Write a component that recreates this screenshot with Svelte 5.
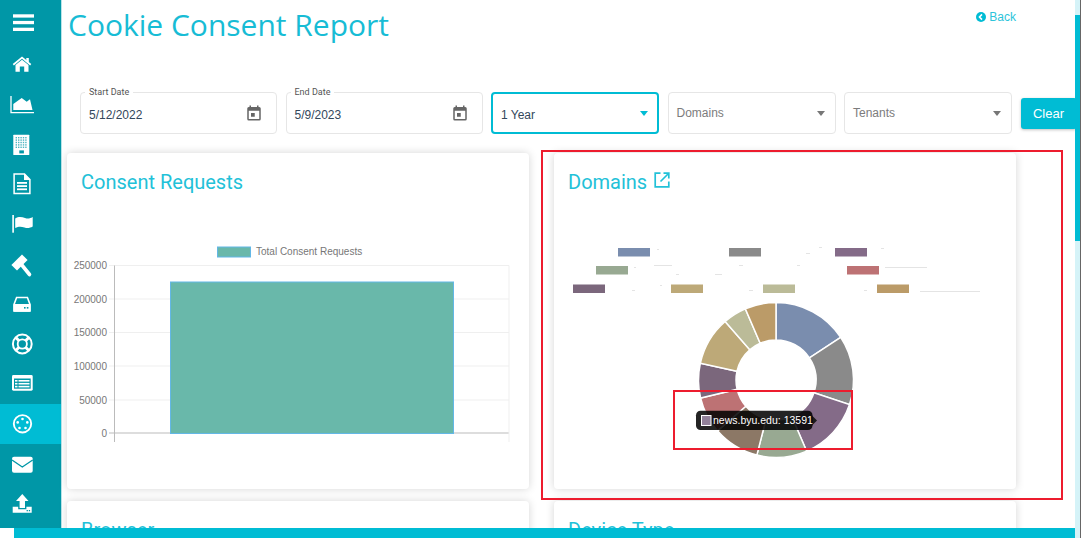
<script>
  const slices = [
    [0, 56.6, '#7a8dae'],
    [56.6, 108.5, '#8a8a8a'],
    [108.5, 156.7, '#846b88'],
    [156.7, 194.3, '#98a992'],
    [194.3, 229, '#8c7866'],
    [229, 256.5, '#bd7274'],
    [256.5, 282.5, '#7b677c'],
    [282.5, 319, '#bda978'],
    [319, 336.7, '#bbbb98'],
    [336.7, 360, '#bb9b68']
  ];
  const cx = 776, cy = 380, R = 77.5, r = 40;
  const pt = (rad, a) => {
    const t = (a * Math.PI) / 180;
    return (cx + rad * Math.sin(t)).toFixed(2) + ' ' + (cy - rad * Math.cos(t)).toFixed(2);
  };
  const arc = (a, b) => {
    const large = b - a > 180 ? 1 : 0;
    return `M${pt(R, a)}A${R} ${R} 0 ${large} 1 ${pt(R, b)}L${pt(r, b)}A${r} ${r} 0 ${large} 0 ${pt(r, a)}Z`;
  };
  const legend = [
    [618, 248, '#7a8dae'], [729, 248, '#8a8a8a'], [835, 248, '#846b88'],
    [596, 266, '#98a992'], [847, 266, '#bd7274'],
    [573, 284.5, '#7b677c'], [671, 284.5, '#bda978'], [763, 284.5, '#bbbb98'], [877, 284.5, '#bb9b68']
  ];
  const specks = [
    [657, 249, 2], [819, 247, 3], [806, 253, 4], [881, 248, 3], [634, 267, 2], [654, 265, 18],
    [676, 274, 3], [715, 274, 7], [739, 265, 4], [797, 265, 3], [885, 267, 42], [632, 290, 3],
    [660, 285, 2], [749, 290, 4], [864, 290, 3], [920, 291, 60]
  ];
  const ticks = [[250000, 265.5], [200000, 299], [150000, 332.5], [100000, 366], [50000, 400], [0, 433]];
  const windows = [];
  for (let row = 0; row < 5; row++) for (let col = 0; col < 5; col++) windows.push([15.6 + col * 2.4, 13 + row * 2.4]);
</script>

<div class="page">
  <nav class="side">
    <div class="item"><svg viewBox="0 0 44 40"><rect x="13" y="10.3" width="21" height="3.3"/><rect x="13" y="16.9" width="21" height="3.3"/><rect x="13" y="23.7" width="21" height="3.3"/></svg></div>
    <div class="item"><svg viewBox="0 0 44 40"><path d="M15.5 21 22 15.7 28.5 21V27.7H24.2V22.5H19.8V27.7H15.5Z"/><path class="line" stroke-width="1.8" d="M13.3 20.7 22 13.6 30.7 20.7"/><rect x="26.3" y="14" width="2.5" height="4"/></svg></div>
    <div class="item"><svg viewBox="0 0 44 40"><path class="line" stroke-width="1.3" d="M11 12V28.7H34"/><path d="M13.3 26V20L21.7 14 26.7 17.7 30 15.3 32.5 26Z"/></svg></div>
    <div class="item"><svg viewBox="0 0 44 40"><rect x="13.3" y="10.7" width="16" height="20.3" rx=".6"/>{#each windows as w}<rect class="cut-soft" x={w[0]} y={w[1]} width="1.4" height="1.4"/>{/each}<rect class="cut" x="19.3" y="26.4" width="4.6" height="3"/></svg></div>
    <div class="item"><svg viewBox="0 0 44 40"><path class="line" stroke-width="1.5" d="M14.1 10.1H24.5L29.9 15.5V29.5H14.1Z"/><path d="M24 9.5 30.5 16H24Z"/><rect x="17" y="18" width="10" height="1.8"/><rect x="17" y="21.2" width="10" height="1.8"/><rect x="17" y="24.4" width="10" height="1.8"/></svg></div>
    <div class="item"><svg viewBox="0 0 44 40"><rect x="12.3" y="11" width="1.6" height="17.7"/><path d="M15.2 14.5C19 12 22 13 25 14 28 15 30 14.5 32.7 13V22.5C30 24 27.5 24.5 24.5 23.5 21 22.3 18.5 22.3 15.2 24Z"/></svg></div>
    <div class="item"><svg viewBox="0 0 44 40"><path d="M27.6 16 22 10.4 11.4 21 17 26.6Z"/><path class="line" stroke-width="3.6" stroke-linecap="round" d="M21 20 29.5 30.5"/></svg></div>
    <div class="item"><svg viewBox="0 0 44 40"><path class="line" stroke-width="1.6" d="M16.6 13.5H27.4L30 20.5V27H14V20.5Z"/><rect x="13.5" y="20" width="17" height="7.7" rx="1"/><rect class="cut" x="24" y="23" width="1.6" height="1.6"/><rect class="cut" x="26.8" y="23" width="1.6" height="1.6"/></svg></div>
    <div class="item"><svg viewBox="0 0 44 40"><circle class="line" stroke-width="2" cx="22.3" cy="20" r="9.4"/><circle class="line" stroke-width="1.8" cx="22.3" cy="20" r="4.6"/><path class="line" stroke-width="3" d="M15.8 13.5 19 16.7M28.8 13.5 25.6 16.7M15.8 26.5 19 23.3M28.8 26.5 25.6 23.3"/></svg></div>
    <div class="item"><svg viewBox="0 0 44 40"><rect x="12" y="11" width="20.7" height="15.7" rx="1.4"/><rect class="cut" x="14" y="14.5" width="16.7" height="10.2"/><rect x="15" y="16" width="2.5" height="1.6"/><rect x="18.5" y="16" width="11" height="1.6"/><rect x="15" y="18.9" width="2.5" height="1.6"/><rect x="18.5" y="18.9" width="11" height="1.6"/><rect x="15" y="21.8" width="2.5" height="1.6"/><rect x="18.5" y="21.8" width="11" height="1.6"/></svg></div>
    <div class="item active"><svg viewBox="0 0 44 40"><circle class="line" stroke-width="1.9" cx="22.5" cy="19.8" r="8.7"/><circle cx="22.5" cy="15" r="1.3"/><circle cx="17.7" cy="18.4" r="1.3"/><circle cx="27.3" cy="18.4" r="1.3"/><circle cx="19.5" cy="24" r="1.3"/><circle cx="25.5" cy="24" r="1.3"/></svg></div>
    <div class="item"><svg viewBox="0 0 44 40"><rect x="12" y="12.7" width="20.7" height="16" rx="2"/><path class="line-cut" d="M12 16 22.3 23 32.7 16"/></svg></div>
    <div class="item"><svg viewBox="0 0 44 40"><path d="M22.3 10 28.5 17H25V24H19.6V17H16Z"/><path d="M12.7 22.7H18.2V25.2H26.4V22.7H31.7V28.7H12.7Z"/><rect class="cut" x="26.6" y="26" width="1.3" height="1.3"/><rect class="cut" x="28.8" y="26" width="1.3" height="1.3"/></svg></div>
  </nav>

  <main class="main">
    <header class="head">
      <h1>Cookie Consent Report</h1>
      <a class="back" href="#back">
        <svg viewBox="0 0 10 10"><circle cx="5" cy="5" r="5" fill="#00bcd4"/><path d="M6 2.4 3.5 5 6 7.6" fill="none" stroke="#fff" stroke-width="1.6"/></svg>
        Back
      </a>
    </header>

    <section class="filters">
      <div class="field date">
        <span class="legend">Start Date</span>
        <span class="value">5/12/2022</span>
        <svg class="cal" viewBox="0 0 24 24"><path d="M19 4h-1V2h-2v2H8V2H6v2H5a2 2 0 0 0-2 2v14a2 2 0 0 0 2 2h14a2 2 0 0 0 2-2V6a2 2 0 0 0-2-2zm0 16H5V9h14v11zM8 12h5v5H8z" transform="translate(0 0)"/></svg>
      </div>
      <div class="field date">
        <span class="legend">End Date</span>
        <span class="value">5/9/2023</span>
        <svg class="cal" viewBox="0 0 24 24"><path d="M19 4h-1V2h-2v2H8V2H6v2H5a2 2 0 0 0-2 2v14a2 2 0 0 0 2 2h14a2 2 0 0 0 2-2V6a2 2 0 0 0-2-2zm0 16H5V9h14v11zM8 12h5v5H8z"/></svg>
      </div>
      <div class="field select focus">
        <span class="value year">1 Year</span>
        <i class="caret"></i>
      </div>
      <div class="field select">
        <span class="placeholder">Domains</span>
        <i class="caret"></i>
      </div>
      <div class="field select">
        <span class="placeholder">Tenants</span>
        <i class="caret"></i>
      </div>
      <button class="clear">Clear</button>
    </section>

    <section class="cards">
      <article class="card">
        <h2>Consent Requests</h2>
        <svg class="chart" viewBox="67 235 462 254">
          <rect x="217.5" y="247" width="33" height="10" fill="#69b8aa" stroke="#63b7e6" stroke-width="1"/>
          <text x="256" y="255" class="lbl">Total Consent Requests</text>
          {#each ticks as t}
            <line x1="109" x2="509" y1={t[1]} y2={t[1]} stroke={t[0] === 0 ? '#bbb' : '#efefef'} />
            <text x="107" y={t[1] + 3.5} class="lbl" text-anchor="end">{t[0]}</text>
          {/each}
          <line x1="114.5" x2="114.5" y1="265.5" y2="442" stroke="#bbb"/>
          <line x1="509" x2="509" y1="265.5" y2="442" stroke="#efefef"/>
          <rect x="170.5" y="282" width="283" height="151.5" fill="#69b8aa" stroke="#63b7e6" stroke-width="1"/>
        </svg>
      </article>

      <article class="card">
        <h2>Domains
          <svg class="ext" viewBox="0 0 16 16"><path d="M6.5 1.2H1.2V14.8H14.8V9.5M9.5 1.2H14.8V6.5M14.5 1.5 6.5 9.5" fill="none" stroke="#22c1d8" stroke-width="1.7"/></svg>
        </h2>
        <svg class="chart" viewBox="554 235 462 254">
          {#each legend as l}
            <rect x={l[0]} y={l[1]} width="32" height="8.5" fill={l[2]}/>
          {/each}
          {#each specks as s}
            <rect x={s[0]} y={s[1]} width={s[2]} height=".8" fill="#dedede"/>
          {/each}
          {#each slices as s}
            <path d={arc(s[0], s[1])} fill={s[2]} stroke="#fff" stroke-width="1.5"/>
          {/each}
          <path d="M812 415.5 817 420.5 812 425.5Z" fill="#1c1a1c"/>
          <rect x="696" y="410.7" width="116.5" height="19.3" rx="4.5" fill="#000" fill-opacity=".86"/>
          <rect x="701.5" y="415.5" width="9.5" height="10" fill="#92819a" stroke="#fff" stroke-width="1"/>
          <text x="713" y="424" class="tip">news.byu.edu: 13591</text>
        </svg>
      </article>

      <article class="card"><h2>Browser</h2></article>
      <article class="card"><h2>Device Type</h2></article>
    </section>
  </main>

  <div class="mark outer"></div>
  <div class="mark inner"></div>
  <div class="vbar"><div class="vthumb"></div></div>
  <div class="hbar"></div>
</div>

<style>
  :global(body) {
    margin: 0;
    background: #fff;
  }
  .page {
    position: relative;
    display: flex;
    height: 538px;
    overflow: hidden;
    font-family: Roboto, "Liberation Sans", sans-serif;
    background: #fff;
  }
  .side {
    flex: none;
    box-sizing: border-box;
    width: 62px;
    height: 528px;
    padding-top: 4px;
    background: #0097a7;
    border-right: 1px solid #b8e3e8;
    overflow: hidden;
  }
  .item {
    height: 40px;
  }
  .item svg {
    display: block;
    width: 44px;
    height: 40px;
    fill: #fff;
  }
  .item.active {
    background: #00bcd4;
  }
  .line {
    fill: none;
    stroke: #fff;
  }
  .line-cut {
    fill: none;
    stroke: #0097a7;
    stroke-width: 1.3;
  }
  .cut {
    fill: #0097a7;
  }
  .cut-soft {
    fill: #4db5c1;
  }
  .main {
    flex: 1;
    min-width: 0;
    padding-left: 5px;
  }
  .head {
    display: flex;
    justify-content: space-between;
    height: 92px;
  }
  h1 {
    margin: 6px 0 0 1px;
    font: 400 30px/38px "Open Sans", sans-serif;
    color: #17bcd5;
  }
  .back {
    display: flex;
    align-items: center;
    gap: 3px;
    height: 14px;
    margin: 10px 65px 0 0;
    font: 12px/14px "Liberation Sans", sans-serif;
    color: #2cc4da;
    text-decoration: none;
  }
  .back svg {
    width: 10px;
    height: 10px;
  }
  .filters {
    display: flex;
    align-items: flex-start;
    gap: 8.5px;
    height: 61px;
    margin-left: 13px;
  }
  .field {
    position: relative;
    box-sizing: border-box;
    display: flex;
    align-items: center;
    height: 42px;
    padding-left: 8px;
    border: 1px solid #e6e6e6;
    border-radius: 4px;
    background: #fff;
  }
  .date {
    width: 197px;
    padding-top: 4px;
  }
  .select {
    width: 168px;
  }
  .focus {
    border: 2px solid #00bcd4;
  }
  .legend {
    position: absolute;
    top: -6px;
    left: 4px;
    padding: 0 4px;
    font: 9px/11px Roboto, sans-serif;
    color: #555;
    background: #fff;
  }
  .value {
    font: 12px/16px "Liberation Sans", sans-serif;
    color: #33475b;
  }
  .year {
    margin-top: 4px;
  }
  .placeholder {
    font: 12px/16px "Liberation Sans", sans-serif;
    color: #7c7c7c;
  }
  .cal {
    position: absolute;
    top: 11px;
    right: 13px;
    width: 18px;
    height: 18px;
    fill: #666;
  }
  .caret {
    position: absolute;
    top: 18px;
    right: 10px;
    border-left: 4.5px solid transparent;
    border-right: 4.5px solid transparent;
    border-top: 5px solid #777;
  }
  .focus .caret {
    top: 17px;
    right: 9px;
    border-top-color: #00bcd4;
  }
  .clear {
    width: 56px;
    height: 31px;
    margin-top: 6px;
    padding: 0;
    border: 0;
    border-radius: 3px;
    font: 13px "Liberation Sans", sans-serif;
    color: #fff;
    background: #00bcd4;
    box-shadow: 0 1px 3px rgba(0, 0, 0, 0.25);
  }
  .cards {
    display: grid;
    grid-template-columns: 462px 462px;
    grid-auto-rows: 336px;
    column-gap: 25px;
    row-gap: 12px;
  }
  .card {
    border-radius: 4px;
    background: #fff;
    box-shadow: 0 0 8px rgba(0, 0, 0, 0.17);
  }
  h2 {
    display: flex;
    align-items: flex-start;
    gap: 7px;
    height: 24px;
    margin: 0;
    padding: 17px 14px 41px;
    font: 400 20px/24px Roboto, sans-serif;
    color: #22c1d8;
  }
  .ext {
    width: 16px;
    height: 16px;
    margin-top: 2px;
  }
  .chart {
    display: block;
    width: 462px;
    height: 254px;
  }
  .lbl {
    font: 10px "Liberation Sans", sans-serif;
    fill: #777;
  }
  .tip {
    font: 10.5px "Liberation Sans", sans-serif;
    fill: #fff;
  }
  .mark {
    position: absolute;
    box-sizing: border-box;
    border: 2.5px solid #ed1c2e;
  }
  .outer {
    left: 541px;
    top: 150px;
    width: 522px;
    height: 350px;
  }
  .inner {
    left: 672.5px;
    top: 390px;
    width: 180px;
    height: 60px;
    border-width: 2px;
  }
  .vbar {
    position: absolute;
    right: 0;
    top: 0;
    width: 5px;
    height: 538px;
    background: #d5f3f8;
    border-right: 1px solid #666;
  }
  .vthumb {
    height: 241px;
    margin-top: 16px;
    margin-top: 0;
    background: linear-gradient(#d5f3f8 15px, #00bcd4 15px);
  }
  .hbar {
    position: absolute;
    left: 14px;
    right: 6px;
    bottom: 0;
    height: 10px;
    background: #00bcd4;
  }
</style>
